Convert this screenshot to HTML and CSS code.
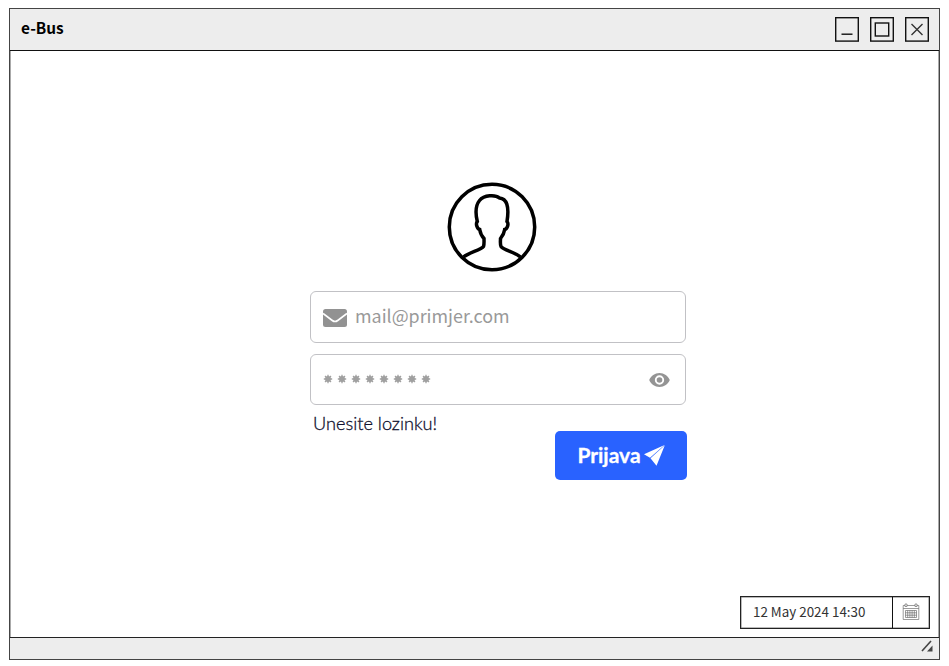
FILE: index.html
```
<!DOCTYPE html>
<html lang="hr">
<head>
<meta charset="utf-8">
<title>e-Bus</title>
<link rel="stylesheet" href="styles.css">
</head>
<body>
<div class="window">
  <header class="titlebar">
    <span class="title">e-Bus</span>
    <div class="controls">
      <svg class="control" viewBox="0 0 24 25"><rect x=".7" y=".7" width="22.6" height="23.4"/><path d="M6.500 17.200h11"/></svg>
      <svg class="control" viewBox="0 0 24 25"><rect x=".7" y=".7" width="22.6" height="23.4"/><rect x="5.3" y="6" width="13.4" height="13"/></svg>
      <svg class="control" viewBox="0 0 24 25"><rect x=".7" y=".7" width="22.6" height="23.4"/><path class="cross" d="M6.500 7l11 11M17.500 7l-11 11"/></svg>
    </div>
  </header>
  <main class="content">
    <form class="login">
      <svg class="avatar" viewBox="0 0 90 90">
        <circle cx="45" cy="45" r="42.700"/>
        <path d="M16.500 75C22 70.500 34 68 36.500 64.500C37.300 62.500 37 59 37 56.500C34.500 54 33.300 51 32.700 47.500C30 47 28.500 41.500 30.300 39.500C28.500 32 28.500 23.500 32.500 18.500C37 12.800 48.500 12.500 52.500 16C59.500 16.500 62.500 24 60 39.500C62 41.500 60.500 47 57.700 47.500C57.200 51 55.500 54 53.500 56.500C53.500 59 53 62.500 54 64.500C56.500 68 68.500 70.500 73.500 75"/>
      </svg>
      <div class="field mail">
        <svg class="envelope" viewBox="0 0 24 18"><rect width="24" height="18" rx="2.500"/><path d="M0 4.500L9.300 11.500Q12 13.500 14.700 11.500L24 4.500"/></svg>
        <span class="placeholder">mail@primjer.com</span>
      </div>
      <div class="field password">
        <svg class="dots" viewBox="0 0 108 10">
          <defs><g id="dot"><circle cx="5" cy="5" r="2.900"/><path d="M5 .8v8.400M.8 5h8.400M2 2l6 6M8 2l-6 6"/></g></defs>
          <use href="#dot"/><use href="#dot" x="14"/><use href="#dot" x="28"/><use href="#dot" x="42"/><use href="#dot" x="56"/><use href="#dot" x="70"/><use href="#dot" x="84"/><use href="#dot" x="98"/>
        </svg>
        <svg class="eye" viewBox="1 4.500 22 15"><path d="M12 4.500C7 4.500 2.730 7.610 1 12c1.730 4.390 6 7.500 11 7.500s9.270-3.110 11-7.500c-1.730-4.390-6-7.500-11-7.500zM12 17a5 5 0 1 1 0-10 5 5 0 0 1 0 10zm0-8a3 3 0 1 0 0 6 3 3 0 0 0 0-6z"/></svg>
      </div>
      <div class="actions">
        <span class="hint">Unesite lozinku!</span>
        <button class="submit" type="button"><span class="submit-label">Prijava</span><svg class="plane" viewBox="0 0 21 21"><path d="M20.500 0L0 9.200l6 3.600zM20.800.2L6.500 13.300l6 7.500z"/></svg></button>
      </div>
    </form>
    <div class="date">
      <span class="date-value">12 May 2024 14:30</span>
      <span class="date-button">
        <svg class="calendar" viewBox="0 0 18 18"><path d="M3 2.500H1.200V16.500H16.800V2.500H15M5 2.500H13M1.200 5.500H16.800M3 2V1h2v2.500H3zM13 2V1h2v2.500h-2zM3.500 7.500h11v7h-11zM3.500 9.800h11M3.500 12.200h11M5.700 7.500v7M7.900 7.500v7M10.100 7.500v7M12.300 7.500v7"/></svg>
      </span>
    </div>
  </main>
  <footer class="statusbar">
    <svg class="grip" viewBox="0 0 12 12"><path class="grip-line" d="M1 11L10 1"/><path class="grip-corner" d="M11.500 5.500v6H6z"/></svg>
  </footer>
</div>
</body>
</html>
```
FILE: styles.css
```
* { box-sizing: border-box; }
body {
  margin: 0;
  padding: 8px 9px 6px 9px;
  height: 666px;
  background: #fff;
  font-family: "Noto Sans CJK SC", "Noto Sans", sans-serif;
}
svg { display: block; flex: none; fill: none; }
.window {
  height: 652px;
  display: flex;
  flex-direction: column;
  border: 1px solid #444;
  box-shadow: inset 0 0 0 1px #aaa;
}
.titlebar {
  height: 42px;
  flex: none;
  display: flex;
  align-items: center;
  justify-content: space-between;
  padding: 0 10.400px 0 11px;
  background: #ededed;
  border-bottom: 1px solid #111;
}
.title { font-size: 15.4px; font-weight: 700; line-height: 20px; color: #000; margin-top: -5px; }
.controls { display: flex; gap: 11px; }
.control { width: 24px; height: 25px; stroke: #111; stroke-width: 1.4; }
.cross { stroke: #333; }
.content { flex: 1; display: flex; flex-direction: column; justify-content: space-between; }
.login { width: 377px; margin: 131px 0 0 300px; display: flex; flex-direction: column; }
.avatar { width: 90px; height: 90px; margin-left: 137px; stroke: #000; stroke-width: 3.5; }
.field {
  width: 376px;
  display: flex;
  align-items: center;
  border: 1px solid #c1c1c5;
  border-radius: 6px;
}
.mail { height: 52px; margin-top: 19px; padding-left: 12px; }
.password { height: 51px; margin-top: 11px; padding: 0 15px 0 12px; justify-content: space-between; }
.envelope { width: 24px; height: 18px; margin-top: 2px; fill: #929292; }
.envelope path { fill: none; stroke: #fff; stroke-width: 1.7; }
.placeholder { margin-left: 8px; margin-top: -4px; font-size: 17.9px; line-height: 24px; color: #999; }
.dots { width: 108px; height: 10px; margin-top: -1px; fill: #a0a0a0; stroke: #a0a0a0; stroke-width: 1.3; }
.dots circle { stroke: none; }
.eye { width: 21px; height: 14px; margin-top: 1px; fill: #949494; }
.actions { display: flex; justify-content: space-between; align-items: flex-start; padding-left: 3px; }
.hint {
  margin-top: 7px;
  font-family: Lato, sans-serif;
  font-weight: 300;
  font-size: 18.2px;
  line-height: 22px;
  color: #10102e;
  -webkit-text-stroke: .3px #10102e;
}
.submit {
  width: 132px;
  height: 49px;
  margin-top: 26px;
  padding: 0;
  display: flex;
  align-items: center;
  justify-content: center;
  gap: 3px;
  border: 0;
  border-radius: 5px;
  background: #2962ff;
  color: #fff;
  font: 700 21px/24px Lato, sans-serif;
}
.submit-label { margin-top: -2px; -webkit-text-stroke: .3px #fff; }
.plane { width: 21px; height: 21px; fill: #fff; }
.date {
  width: 190px;
  height: 33px;
  margin: 0 9px 8px auto;
  display: flex;
  border: 1px solid #222;
  box-shadow: inset 0 0 0 .5px #777;
}
.date-value { flex: 1; padding-left: 12px; font-size: 13.4px; line-height: 29px; color: #333; }
.date-button { width: 37px; border-left: 1px solid #111; display: flex; align-items: center; justify-content: center; }
.calendar { width: 18px; height: 18px; margin-top: -2px; stroke: #666; stroke-width: .65; }
.statusbar {
  height: 22px;
  flex: none;
  display: flex;
  justify-content: flex-end;
  align-items: center;
  padding-right: 6px;
  background: #ededed;
  border-top: 1px solid #222;
}
.grip { width: 12px; height: 12px; margin-top: -5px; }
.grip-line { stroke: #444; stroke-width: 1.6; }
.grip-corner { fill: #444; }
```
